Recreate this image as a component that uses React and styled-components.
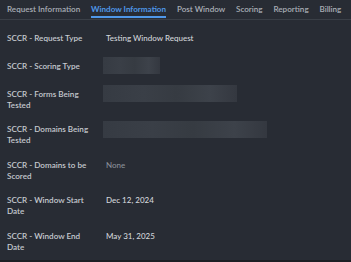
import React from "react";
import styled, { createGlobalStyle } from "styled-components";

const GlobalStyle = createGlobalStyle`
  html, body {
    margin: 0;
    padding: 0;
    background: #282c34;
  }
  body {
    font-family: "Lato", "Open Sans", sans-serif;
  }
`;

const Page = styled.div`
  width: 351px;
  height: 262px;
  box-sizing: border-box;
  background: #282c34;
  border-bottom: 2px solid #1c1f24;
  overflow: hidden;
`;

const TabBar = styled.div`
  display: flex;
  column-gap: 10.8px;
  padding: 0 7px 1px;
  border-bottom: 1px solid #3a3f47;
`;

const Tab = styled.div`
  height: 18px;
  box-sizing: border-box;
  padding-top: 3px;
  font-size: 8.1px;
  line-height: 12px;
  white-space: nowrap;
  font-weight: ${(p) => (p.$active ? 700 : 600)};
  color: ${(p) => (p.$active ? "#4f97e8" : "#a9aeb6")};
  border-bottom: 2px solid ${(p) => (p.$active ? "#4f97e8" : "transparent")};
`;

const Fields = styled.div`
  display: flex;
  flex-direction: column;
  row-gap: 13.5px;
  padding: 12.8px 7px 0;
`;

const Row = styled.div`
  display: grid;
  grid-template-columns: 99px 1fr;
  align-items: start;
  min-height: 14.5px;
  font-size: 8.1px;
  line-height: 11px;
`;

const Label = styled.div`
  width: 88px;
  color: #c5c9cf;
  font-weight: 600;
`;

const Value = styled.div`
  color: ${(p) => (p.$muted ? "#8a9099" : "#d2d5da")};
  font-size: 8px;
  font-weight: 500;
`;

const Redacted = styled.div`
  width: ${(p) => p.$w}px;
  height: 17px;
  margin-top: -3.5px;
  margin-left: -3px;
  background: linear-gradient(
    90deg,
    #363b43 0%,
    #3a3f47 30%,
    #363b42 55%,
    #3d424a 80%,
    #343840 100%
  );
  filter: blur(0.6px);
`;

const tabs = [
  "Request Information",
  "Window Information",
  "Post Window",
  "Scoring",
  "Reporting",
  "Billing",
];

const fields = [
  { label: "SCCR - Request Type", value: "Testing Window Request" },
  { label: "SCCR - Scoring Type", blur: 57 },
  { label: "SCCR - Forms Being Tested", blur: 134 },
  { label: "SCCR - Domains Being Tested", blur: 164 },
  { label: "SCCR - Domains to be Scored", value: "None", muted: true },
  { label: "SCCR - Window Start Date", value: "Dec 12, 2024" },
  { label: "SCCR - Window End Date", value: "May 31, 2025" },
];

const App = () => {
  return (
    <Page>
      <GlobalStyle />
      <TabBar>
        {tabs.map((t) => (
          <Tab key={t} $active={t === "Window Information"}>
            {t}
          </Tab>
        ))}
      </TabBar>
      <Fields>
        {fields.map((f) => (
          <Row key={f.label}>
            <Label>{f.label}</Label>
            {f.blur ? (
              <Redacted $w={f.blur} />
            ) : (
              <Value $muted={f.muted}>{f.value}</Value>
            )}
          </Row>
        ))}
      </Fields>
    </Page>
  );
};

export default App;
